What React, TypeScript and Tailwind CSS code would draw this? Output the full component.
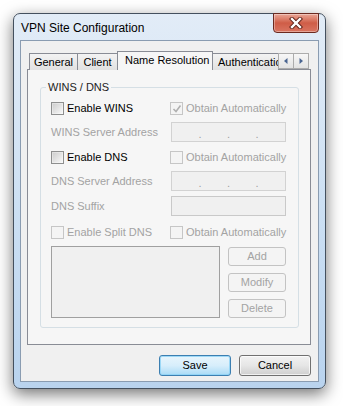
import React from "react";

function Check({ enabled, checked }: { enabled: boolean; checked?: boolean }) {
  return (
    <div
      className={
        "relative w-[13px] h-[13px] shrink-0 border " +
        (enabled ? "border-[#8e8f8f] bg-gradient-to-br from-[#dcdcdc] to-[#fbfbfb]" : "border-[#c6c6c6] bg-[#f4f4f4]")
      }
    >
      {enabled && <div className="absolute inset-[1px] bg-gradient-to-br from-[#cfcfcf] to-[#f6f6f6]" />}
      {checked && (
        <svg className="absolute left-[1px] top-[1px]" width="10" height="10" viewBox="0 0 10 10">
          <path d="M1.5 5 L4 7.5 L8.5 1.5" fill="none" stroke={enabled ? "#333" : "#b0b0b0"} strokeWidth="1.6" />
        </svg>
      )}
    </div>
  );
}

function CheckRow({ label, enabled, checked }: { label: string; enabled: boolean; checked?: boolean }) {
  return (
    <div className="flex items-center gap-[3px]">
      <Check enabled={enabled} checked={checked} />
      <span className={enabled ? "text-black" : "text-[#a3a3a3]"}>{label}</span>
    </div>
  );
}

function IpField() {
  return (
    <div className="ml-[1px] w-[115px] h-[20px] border border-[#d2d2d2] bg-[#f0f0f0] flex items-center px-[1px] text-[#a0a0a0] leading-none">
      <div className="flex-1" />
      <span className="pt-[4px]">.</span>
      <div className="flex-1" />
      <span className="pt-[4px]">.</span>
      <div className="flex-1" />
      <span className="pt-[4px]">.</span>
      <div className="flex-1" />
    </div>
  );
}

function SmallBtn({ label }: { label: string }) {
  return (
    <div className="w-[58px] h-[19px] rounded-[3px] border border-[#c3c3c3] bg-[#f4f4f4] flex items-center justify-center text-[#a3a3a3]">
      {label}
    </div>
  );
}

export default function App() {
  return (
    <div
      className="w-[343px] h-[406px] bg-white pt-[13px] pl-[13px] text-[11px] leading-[13px]"
      style={{ fontFamily: '"Liberation Sans", Arial, sans-serif' }}
    >
      <div className="relative w-[313px] h-[376px] rounded-[7px] border border-[#44505e] bg-gradient-to-b from-[#e2ecf7] via-[#cde0f3] to-[#b9d3ee] shadow-[0_5px_16px_rgba(0,0,0,0.55)] flex flex-col px-[6px] pb-[6px]">
        {/* title bar */}
        <div className="h-[26px] shrink-0 flex items-center pl-[1px] pt-[2px] text-[12px] text-black">
          VPN Site Configuration
        </div>
        {/* close button */}
        <div className="absolute top-[-1px] right-[6px] w-[46px] h-[20px] rounded-b-[4px] border border-[#6b2a20] bg-gradient-to-b from-[#e9a696] via-[#cf5d47] to-[#d97461] flex items-center justify-center shadow-[inset_0_0_0_1px_rgba(255,255,255,0.35)]">
          <svg width="14" height="12" viewBox="0 0 14 12">
            <path d="M3 2 L11 10 M11 2 L3 10" stroke="#5a1f16" strokeWidth="4.2" strokeLinecap="square" />
            <path d="M3 2 L11 10 M11 2 L3 10" stroke="#ffffff" strokeWidth="2.4" strokeLinecap="square" />
          </svg>
        </div>
        {/* client */}
        <div className="flex-1 border border-[#8a9cb1] bg-[#f0f0f0] flex flex-col px-[6px] pt-[11px]">
          {/* tab strip */}
          <div className="relative z-10 h-[18px] flex items-end pl-[2px] -mb-px">
            <div className="h-[17px] w-[49px] border border-b-0 border-[#898c95] bg-gradient-to-b from-[#f3f3f3] to-[#e1e1e1] flex items-center justify-center pt-[1px]">
              General
            </div>
            <div className="h-[17px] w-[41px] -ml-px border border-b-0 border-[#898c95] bg-gradient-to-b from-[#f3f3f3] to-[#e1e1e1] flex items-center justify-center pt-[1px]">
              Client
            </div>
            <div className="h-[19px] w-[96px] -ml-px border border-b-0 border-[#898c95] bg-[#f6f6f6] flex items-start pt-[2px] pl-[7px]">
              Name Resolution
            </div>
            <div className="h-[17px] w-[66px] -ml-px border border-b-0 border-r-0 border-[#898c95] bg-gradient-to-b from-[#f3f3f3] to-[#e1e1e1] flex items-center pl-[5px] pt-[1px] overflow-hidden whitespace-nowrap">
              Authentication
            </div>
            <div className="h-[17px] flex items-start">
              <div className="w-[16px] h-[16px] border border-[#acacac] bg-gradient-to-b from-[#f7f7f7] to-[#e3e3e3] flex items-center justify-center">
                <svg width="4" height="6" viewBox="0 0 4 6"><path d="M3.5 0 L0 3 L3.5 6 Z" fill="#4a6591" /></svg>
              </div>
              <div className="w-[16px] h-[16px] -ml-px border border-[#acacac] bg-gradient-to-b from-[#f7f7f7] to-[#e3e3e3] flex items-center justify-center">
                <svg width="4" height="6" viewBox="0 0 4 6"><path d="M0.5 0 L4 3 L0.5 6 Z" fill="#4a6591" /></svg>
              </div>
            </div>
          </div>
          {/* tab panel */}
          <div className="w-[284px] h-[276px] border border-[#898c95] bg-[#f6f6f6] pt-[17px] pl-[12px]">
            <div className="relative w-[259px] h-[241px] rounded-[3px] border border-[#d5dfe5] pt-[10px] pl-[10px]">
              <span className="absolute -top-[7px] left-[5px] px-[2px] bg-[#f6f6f6] text-[#222]">WINS / DNS</span>
              <div className="flex items-center h-[20px]">
                <div className="w-[119px]"><CheckRow label="Enable WINS" enabled /></div>
                <CheckRow label="Obtain Automatically" enabled={false} checked />
              </div>
              <div className="flex items-center h-[20px] mt-[4px]">
                <div className="w-[119px] text-[#a3a3a3]">WINS Server Address</div>
                <IpField />
              </div>
              <div className="flex items-center h-[20px] mt-[5px]">
                <div className="w-[119px]"><CheckRow label="Enable DNS" enabled /></div>
                <CheckRow label="Obtain Automatically" enabled={false} />
              </div>
              <div className="flex items-center h-[20px] mt-[4px]">
                <div className="w-[119px] text-[#a3a3a3]">DNS Server Address</div>
                <IpField />
              </div>
              <div className="flex items-center h-[20px] mt-[5px]">
                <div className="w-[119px] text-[#a3a3a3]">DNS Suffix</div>
                <div className="ml-[1px] w-[115px] h-[20px] border border-[#c9c9c9] bg-[#f0f0f0]" />
              </div>
              <div className="flex items-center h-[20px] mt-[6px]">
                <div className="w-[119px]"><CheckRow label="Enable Split DNS" enabled={false} /></div>
                <CheckRow label="Obtain Automatically" enabled={false} />
              </div>
              <div className="flex mt-[4px] gap-[8px]">
                <div className="w-[169px] h-[72px] border border-[#a0a0a0] bg-[#f0f0f0]" />
                <div className="flex flex-col gap-[7px] pt-[1px]">
                  <SmallBtn label="Add" />
                  <SmallBtn label="Modify" />
                  <SmallBtn label="Delete" />
                </div>
              </div>
            </div>
          </div>
          {/* bottom buttons */}
          <div className="flex justify-end gap-[8px] mt-[10px] pr-[1px]">
            <div className="w-[72px] h-[21px] rounded-[3px] border border-[#3c7fb1] bg-gradient-to-b from-[#e8f5fc] via-[#d7eefb] to-[#a9dbf6] shadow-[inset_0_0_0_1px_rgba(140,210,245,0.8)] flex items-center justify-center text-black">
              Save
            </div>
            <div className="w-[72px] h-[21px] rounded-[3px] border border-[#707070] bg-gradient-to-b from-[#f2f2f2] via-[#e6e6e6] to-[#cfcfcf] shadow-[inset_0_0_0_1px_rgba(255,255,255,0.7)] flex items-center justify-center text-black">
              Cancel
            </div>
          </div>
        </div>
      </div>
    </div>
  );
}
